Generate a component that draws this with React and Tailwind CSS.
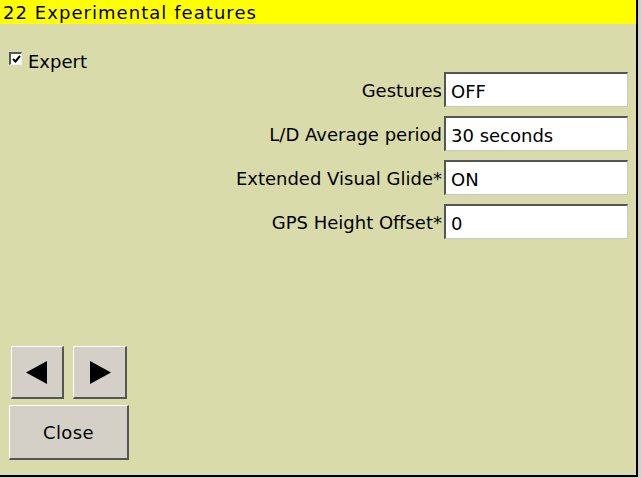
import React from "react";

const rows = [
  { label: "Gestures", value: "OFF" },
  { label: "L/D Average period", value: "30 seconds" },
  { label: "Extended Visual Glide*", value: "ON" },
  { label: "GPS Height Offset*", value: "0" },
];

function ArrowButton({ dir, className }) {
  return (
    <button
      className={
        "flex items-center justify-center h-[53px] bg-[#d4d0c8] border-t border-l border-t-white border-l-white border-r-2 border-b-2 border-r-[#555] border-b-[#555] " +
        className
      }
    >
      <svg width="22" height="23" viewBox="0 0 22 23">
        {dir === "left" ? (
          <polygon points="0,11.5 21,0 21,23" fill="#000" />
        ) : (
          <polygon points="22,11.5 1,0 1,23" fill="#000" />
        )}
      </svg>
    </button>
  );
}

export default function App() {
  return (
    <div className="w-[641px] h-[478px] bg-[#d4d0c8] font-['DejaVu_Sans',sans-serif] text-black">
      <div className="w-[638px] h-[477px] border-r-2 border-b-2 border-black bg-[#dadbab] flex flex-col">
        {/* Title */}
        <div className="h-[24px] bg-[#ffff00] text-[18px] leading-[23px] pt-[1px] pl-[3px] tracking-[1.05px]">
          22 Experimental features
        </div>

        {/* Expert checkbox */}
        <div className="mt-[27px] h-[21px] flex items-start pl-[9px]">
          <div className="mt-[1px] w-[13px] h-[13px] bg-white border-t-2 border-l-2 border-t-[#555] border-l-[#555] border-r border-b border-r-[#eee] border-b-[#eee] flex items-center justify-center">
            <svg width="9" height="8" viewBox="0 0 9 8">
              <path d="M1 4 L3.5 6.5 L8 1" stroke="#000" strokeWidth="2" fill="none" />
            </svg>
          </div>
          <span className="ml-[6px] text-[18px] leading-[21px]">Expert</span>
        </div>

        {/* Property rows */}
        <div className="flex flex-col gap-[9px] pr-[8px]">
          {rows.map((r) => (
            <div key={r.label} className="flex justify-end items-center h-[35px]">
              <span className="text-[18px] leading-[21px] mr-[2px] pt-[2px]">{r.label}</span>
              <div className="w-[184px] h-[35px] bg-white border-t-2 border-l-2 border-t-[#555] border-l-[#555] border-r border-b border-r-[#c8c8c8] border-b-[#c8c8c8] pl-[5px] flex items-center">
                <span className="text-[18px] leading-[21px] pt-[2px]">{r.value}</span>
              </div>
            </div>
          ))}
        </div>

        <div className="flex-1" />

        {/* Buttons */}
        <div className="flex pl-[11px] gap-[9px]">
          <ArrowButton dir="left" className="w-[53px]" />
          <ArrowButton dir="right" className="w-[54px]" />
        </div>
        <div className="mt-[6px] mb-[15px] pl-[9px]">
          <button className="w-[120px] h-[55px] bg-[#d4d0c8] border-t border-l border-t-white border-l-white border-r-2 border-b-2 border-r-[#555] border-b-[#555] text-[18px] tracking-[0.4px]">
            Close
          </button>
        </div>
      </div>
    </div>
  );
}
